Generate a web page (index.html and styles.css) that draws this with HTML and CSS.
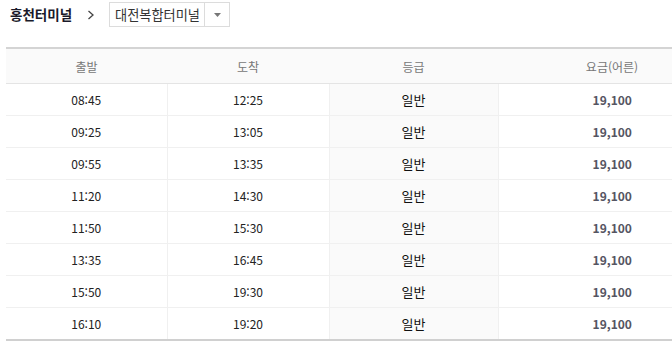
FILE: index.html
```html
<!DOCTYPE html>
<html lang="ko">
<head>
<meta charset="utf-8">
<link rel="stylesheet" href="styles.css">
</head>
<body>
<div class="route">
  <span class="from">홍천터미널</span>
  <svg class="chev" width="8" height="10" viewBox="0 0 8 10"><path d="M1.5 1 L6 5 L1.5 9" fill="none" stroke="#444" stroke-width="1.3"/></svg>
  <div class="select">
    <span class="select-text">대전복합터미널</span>
    <span class="select-btn"><svg width="7" height="4" viewBox="0 0 7 4"><path d="M0 0 H7 L3.5 4 Z" fill="#777"/></svg></span>
  </div>
</div>
<div class="table-wrap">
<table class="tt">
  <colgroup><col class="c1"><col class="c2"><col class="c3"><col class="c4"></colgroup>
  <thead>
    <tr><th>출발</th><th>도착</th><th>등급</th><th class="fee-h">요금(어른)</th></tr>
  </thead>
  <tbody>
    <tr><td>08:45</td><td>12:25</td><td class="grade">일반</td><td class="fee">19,100</td></tr>
    <tr><td>09:25</td><td>13:05</td><td class="grade">일반</td><td class="fee">19,100</td></tr>
    <tr><td>09:55</td><td>13:35</td><td class="grade">일반</td><td class="fee">19,100</td></tr>
    <tr><td>11:20</td><td>14:30</td><td class="grade">일반</td><td class="fee">19,100</td></tr>
    <tr><td>11:50</td><td>15:30</td><td class="grade">일반</td><td class="fee">19,100</td></tr>
    <tr><td>13:35</td><td>16:45</td><td class="grade">일반</td><td class="fee">19,100</td></tr>
    <tr><td>15:50</td><td>19:30</td><td class="grade">일반</td><td class="fee">19,100</td></tr>
    <tr><td>16:10</td><td>19:20</td><td class="grade">일반</td><td class="fee">19,100</td></tr>
  </tbody>
</table>
</div>
</body>
</html>
```
FILE: styles.css
```css
html, body {
  margin: 0;
  padding: 0;
  overflow: hidden;
  background: #fff;
}
body {
  font-family: "Noto Sans CJK KR", "Noto Sans", sans-serif;
  font-size: 12px;
  color: #222;
  width: 672px;
  height: 344px;
}
.route {
  display: flex;
  align-items: center;
  height: 25px;
  margin-top: 2px;
  padding-left: 10px;
}
.from {
  width: 63px;
  font-weight: bold;
  font-size: 13.5px;
  color: #1a1a2a;
  line-height: 1;
  white-space: nowrap;
}
.chev {
  margin-left: 14px;
  margin-right: 14px;
}
.select {
  display: flex;
  align-items: stretch;
  height: 23px;
  border: 1px solid #dcdcdc;
}
.select-text {
  display: flex;
  align-items: center;
  width: 95px;
  box-sizing: border-box;
  padding-left: 5px;
  font-size: 13.2px;
  color: #333;
  white-space: nowrap;
  border-right: 1px solid #dcdcdc;
}
.select-btn {
  display: flex;
  align-items: center;
  justify-content: center;
  width: 24px;
}
.table-wrap {
  margin-top: 20px;
  margin-left: 6px;
  width: 666px;
}
.tt {
  width: 666px;
  border-collapse: collapse;
  table-layout: fixed;
  border-top: 2px solid #d4d4d4;
  border-bottom: 2px solid #d0d0d0;
}
.c1 { width: 161px; }
.c2 { width: 162px; }
.c3 { width: 169px; }
.c4 { width: 174px; }
.tt th {
  height: 34px;
  padding: 0;
  background: #fafafa;
  border-bottom: 1px solid #e4e4e4;
  font-weight: normal;
  color: #777;
  font-size: 12px;
}
.tt td {
  height: 31px;
  padding: 0;
  text-align: center;
  border-bottom: 1px solid #f0f0f0;
  border-left: 1px solid #f0f0f0;
  font-size: 12px;
  color: #222;
}
.tt td:first-child { border-left: none; }
.tt tbody tr:last-child td { border-bottom: none; }
.tt td.grade {
  background: #fafafa;
  font-size: 13px;
  color: #111;
}
.tt th.fee-h,
.tt td.fee {
  padding-left: 54px;
}
.tt td.fee {
  font-weight: bold;
  color: #555562;
}
```
